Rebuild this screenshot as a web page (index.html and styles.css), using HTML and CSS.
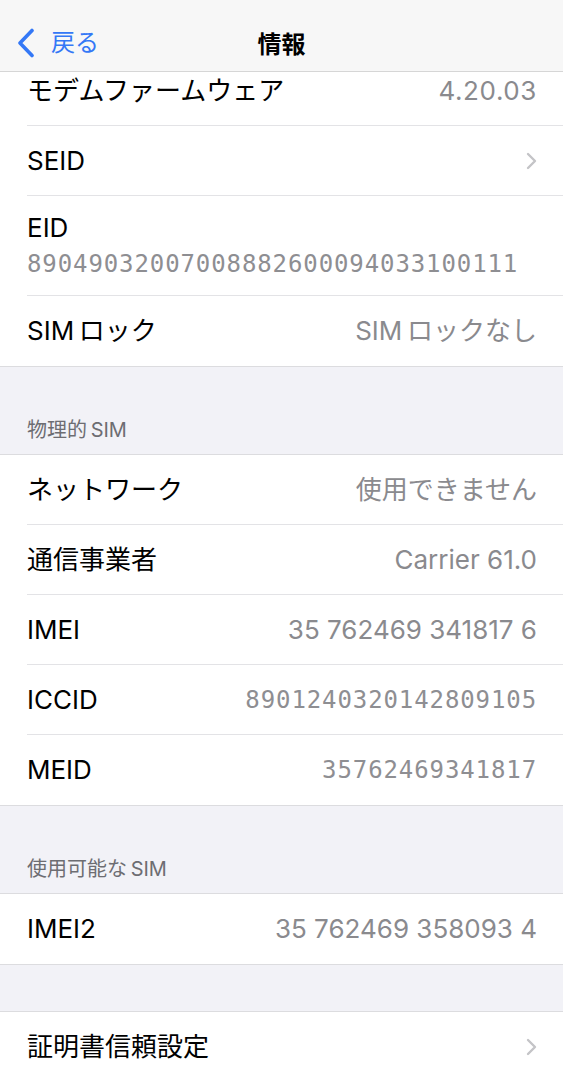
FILE: index.html
```html
<!DOCTYPE html>
<html lang="ja">
  <head>
    <meta charset="UTF-8" />
    <meta name="viewport" content="width=device-width, initial-scale=1.0" />
    <title>情報</title>
    <link rel="stylesheet" href="styles.css">
  </head>
  <body>
    <nav class="navbar">
      <a class="back" href="#">
        <svg class="back-icon" width="18" height="30" viewBox="0 0 18 30">
          <polyline points="15,2.5 3,15 15,27.5" fill="none" stroke="#3478f6" stroke-width="3.6" stroke-linecap="round" stroke-linejoin="round" />
        </svg>
        <span>戻る</span>
      </a>
      <h1 class="title">情報</h1>
    </nav>

    <main class="page">
      <section class="group">
        <div class="row">
          <div class="row-inner">
            <span class="label">モデムファームウェア</span>
            <span class="value digits">4.20.03</span>
          </div>
        </div>
        <div class="row">
          <div class="row-inner">
            <span class="label">SEID</span>
            <svg class="chevron" width="11" height="18" viewBox="0 0 11 18">
              <polyline points="2,2 9,9 2,16" fill="none" stroke="#c4c4c7" stroke-width="2.4" stroke-linecap="round" stroke-linejoin="round" />
            </svg>
          </div>
        </div>
        <div class="row tall">
          <div class="row-inner stack">
            <span class="label">EID</span>
            <span class="value mono">89049032007008882600094033100111</span>
          </div>
        </div>
        <div class="row">
          <div class="row-inner">
            <span class="label">SIM&thinsp;ロック</span>
            <span class="value">SIM&thinsp;ロックなし</span>
          </div>
        </div>
      </section>

      <div class="section-header">物理的&thinsp;SIM</div>

      <section class="group">
        <div class="row">
          <div class="row-inner">
            <span class="label">ネットワーク</span>
            <span class="value">使用できません</span>
          </div>
        </div>
        <div class="row">
          <div class="row-inner">
            <span class="label">通信事業者</span>
            <span class="value">Carrier 61.0</span>
          </div>
        </div>
        <div class="row">
          <div class="row-inner">
            <span class="label">IMEI</span>
            <span class="value">35 762469 341817 6</span>
          </div>
        </div>
        <div class="row">
          <div class="row-inner">
            <span class="label">ICCID</span>
            <span class="value mono">8901240320142809105</span>
          </div>
        </div>
        <div class="row">
          <div class="row-inner">
            <span class="label">MEID</span>
            <span class="value mono">35762469341817</span>
          </div>
        </div>
      </section>

      <div class="section-header">使用可能な&thinsp;SIM</div>

      <section class="group">
        <div class="row">
          <div class="row-inner">
            <span class="label">IMEI2</span>
            <span class="value">35 762469 358093 4</span>
          </div>
        </div>
      </section>

      <div class="spacer"></div>

      <section class="group">
        <div class="row">
          <div class="row-inner">
            <span class="label">証明書信頼設定</span>
            <svg class="chevron" width="11" height="18" viewBox="0 0 11 18">
              <polyline points="2,2 9,9 2,16" fill="none" stroke="#c4c4c7" stroke-width="2.4" stroke-linecap="round" stroke-linejoin="round" />
            </svg>
          </div>
        </div>
      </section>
    </main>
  </body>
</html>
```

FILE: styles.css
```css
body {
  margin: 0;
  background-color: #f2f2f7;
  font-family: "Inter", "Noto Sans CJK JP", sans-serif;
  color: #000;
}

.navbar {
  position: fixed;
  top: 0;
  left: 0;
  right: 0;
  height: 72px;
  box-sizing: border-box;
  background-color: #f7f7f7;
  border-bottom: 1px solid #d6d6d6;
  display: flex;
  align-items: center;
  justify-content: center;
  z-index: 10;
}

.back {
  position: absolute;
  left: 17px;
  top: 28px;
  display: flex;
  align-items: center;
  gap: 16px;
  color: #3478f6;
  text-decoration: none;
  font-size: 24px;
  line-height: 30px;
}

.title {
  margin: 0;
  padding-top: 14px;
  font-size: 24px;
  font-weight: 700;
}

.page {
  padding-top: 56px;
}

.group {
  background-color: #fff;
  border-top: 1px solid #dcdcdf;
  border-bottom: 1px solid #dcdcdf;
}

.group:first-child {
  border-top: none;
}

.row {
  padding-left: 27px;
  height: 70px;
}

.row.tall {
  height: 100px;
}

.row-inner {
  height: 100%;
  box-sizing: border-box;
  padding-right: 26px;
  border-bottom: 1px solid #e3e3e6;
  display: flex;
  align-items: center;
  justify-content: space-between;
}

.row:last-child .row-inner {
  border-bottom: none;
}

.row-inner.stack {
  flex-direction: column;
  align-items: flex-start;
  justify-content: flex-start;
  padding-top: 17px;
  gap: 6px;
}

.label {
  font-size: 26px;
  line-height: 30px;
  white-space: nowrap;
}

.value {
  font-size: 26px;
  line-height: 30px;
  color: #8a8a8e;
  white-space: nowrap;
}

.digits {
  letter-spacing: 0.6px;
}

.mono {
  font-family: "DejaVu Sans Mono", monospace;
  font-size: 24px;
  letter-spacing: 0.9px;
  color: #8e8e92;
}

.section-header {
  height: 87px;
  box-sizing: border-box;
  padding: 0 27px 11px;
  display: flex;
  align-items: flex-end;
  font-size: 20px;
  color: #6d6d72;
}

.spacer {
  height: 46px;
}
```
